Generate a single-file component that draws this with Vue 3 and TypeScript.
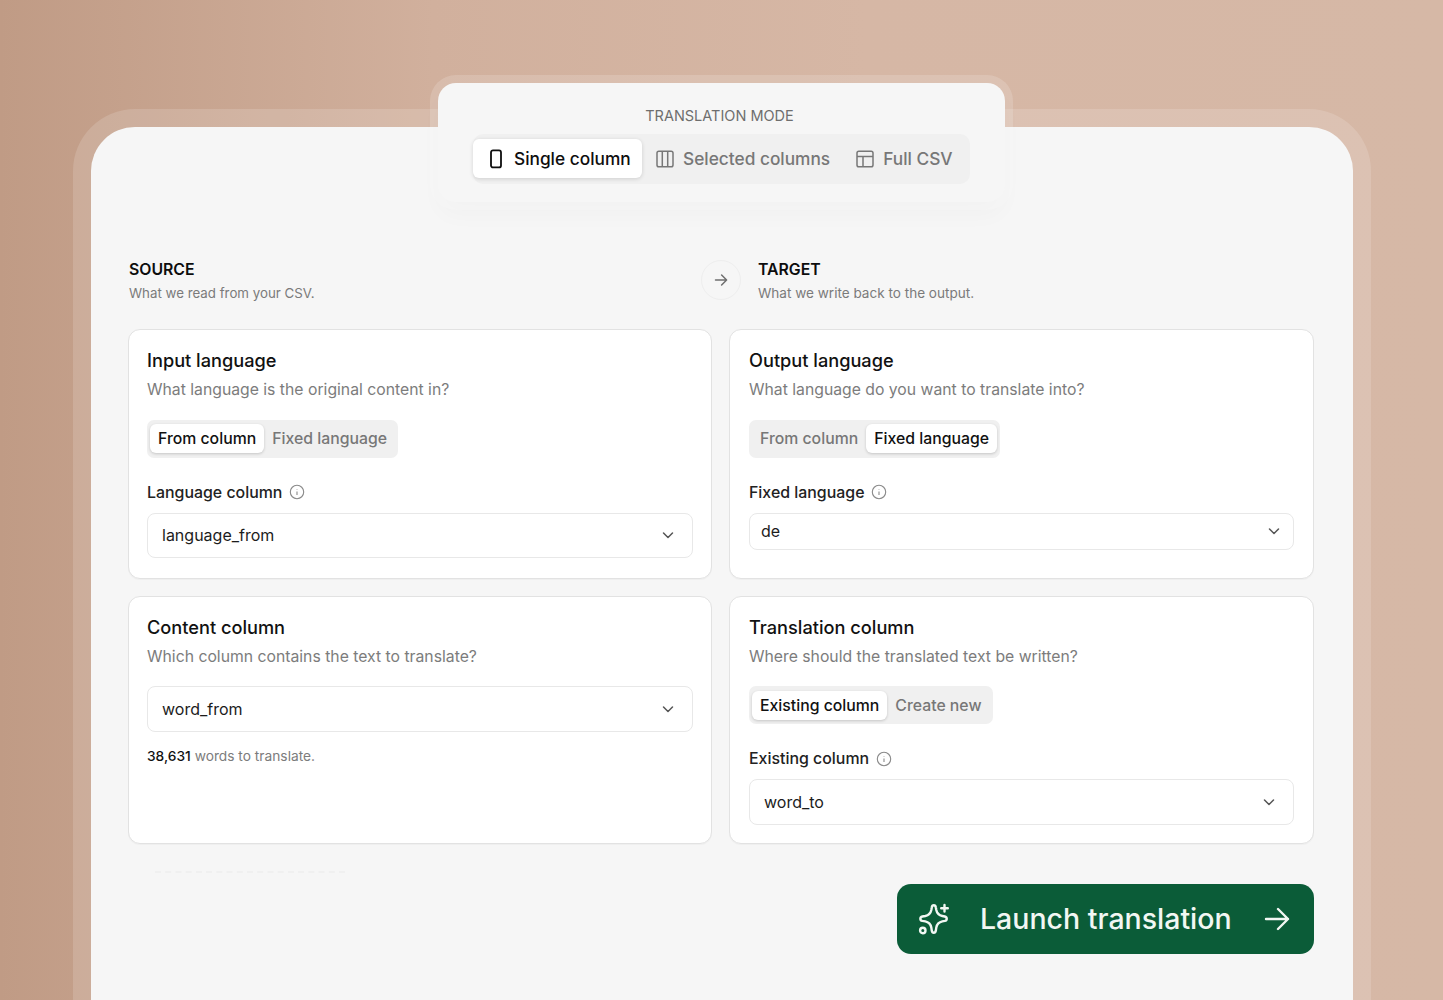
<script setup lang="ts">
const modes = [
  { label: 'Single column', icon: 'single', active: true },
  { label: 'Selected columns', icon: 'columns', active: false },
  { label: 'Full CSV', icon: 'table', active: false },
]
</script>

<template>
  <main class="page">
    <section class="shell">
      <div class="mode">
        <p class="mode-title">TRANSLATION MODE</p>
        <div class="mode-seg">
          <button v-for="m in modes" :key="m.label" class="mode-btn" :class="[{ on: m.active }, m.icon]">
            <svg v-if="m.icon === 'single'" width="18" height="20" viewBox="0 0 18 20" fill="none" stroke="currentColor" stroke-width="1.8">
              <rect x="4" y="1.400" width="10" height="17" rx="2" />
            </svg>
            <svg v-else-if="m.icon === 'columns'" width="18" height="18" viewBox="0 0 18 18" fill="none" stroke="currentColor" stroke-width="1.5">
              <rect x="1" y="1.200" width="16" height="15.600" rx="1.800" />
              <path d="M6.300 1.200v15.600M11.700 1.200v15.600" />
            </svg>
            <svg v-else width="18" height="18" viewBox="0 0 18 18" fill="none" stroke="currentColor" stroke-width="1.5">
              <rect x="1" y="1.200" width="16" height="15.600" rx="1.800" />
              <path d="M1 6.400h16M7 6.400v10.400" />
            </svg>
            <span>{{ m.label }}</span>
          </button>
        </div>
      </div>

      <div class="heads">
        <div class="head">
          <h2>SOURCE</h2>
          <p>What we read from your CSV.</p>
        </div>
        <div class="arrow-dot">
          <svg width="16" height="16" viewBox="0 0 16 16" fill="none" stroke="#6f6f6f" stroke-width="1.5" stroke-linecap="round" stroke-linejoin="round">
            <path d="M2.500 8h11M8.600 3l5 5-5 5" />
          </svg>
        </div>
        <div class="head target">
          <h2>TARGET</h2>
          <p>What we write back to the output.</p>
        </div>
      </div>

      <div class="grid">
        <article class="card">
          <h3>Input language</h3>
          <p class="sub">What language is the original content in?</p>
          <div class="seg">
            <span class="opt on">From column</span>
            <span class="opt">Fixed language</span>
          </div>
          <label class="lab">Language column
            <svg class="info" width="16" height="16" viewBox="0 0 16 16" fill="none" stroke="#8a8a8a" stroke-width="1.100"><circle cx="8" cy="8" r="6.700" /><path d="M8 7.400v3.600M8 5v.6" /></svg>
          </label>
          <div class="select">
            <span>language_from</span>
            <svg width="14" height="14" viewBox="0 0 14 14" fill="none" stroke="#555" stroke-width="1.500" stroke-linecap="round" stroke-linejoin="round"><path d="M2.500 5l4.500 4.500L11.500 5" /></svg>
          </div>
        </article>

        <article class="card right">
          <h3>Output language</h3>
          <p class="sub">What language do you want to translate into?</p>
          <div class="seg">
            <span class="opt">From column</span>
            <span class="opt on">Fixed language</span>
          </div>
          <label class="lab">Fixed language
            <svg class="info" width="16" height="16" viewBox="0 0 16 16" fill="none" stroke="#8a8a8a" stroke-width="1.100"><circle cx="8" cy="8" r="6.700" /><path d="M8 7.400v3.600M8 5v.6" /></svg>
          </label>
          <div class="select small">
            <span>de</span>
            <svg width="14" height="14" viewBox="0 0 14 14" fill="none" stroke="#555" stroke-width="1.500" stroke-linecap="round" stroke-linejoin="round"><path d="M2.500 5l4.500 4.500L11.500 5" /></svg>
          </div>
        </article>

        <article class="card">
          <h3>Content column</h3>
          <p class="sub">Which column contains the text to translate?</p>
          <div class="select spaced">
            <span>word_from</span>
            <svg width="14" height="14" viewBox="0 0 14 14" fill="none" stroke="#555" stroke-width="1.500" stroke-linecap="round" stroke-linejoin="round"><path d="M2.500 5l4.500 4.500L11.500 5" /></svg>
          </div>
          <p class="count"><b>38,631</b> words to translate.</p>
        </article>

        <article class="card right">
          <h3>Translation column</h3>
          <p class="sub">Where should the translated text be written?</p>
          <div class="seg">
            <span class="opt on">Existing column</span>
            <span class="opt">Create new</span>
          </div>
          <label class="lab">Existing column
            <svg class="info" width="16" height="16" viewBox="0 0 16 16" fill="none" stroke="#8a8a8a" stroke-width="1.100"><circle cx="8" cy="8" r="6.700" /><path d="M8 7.400v3.600M8 5v.6" /></svg>
          </label>
          <div class="select">
            <span>word_to</span>
            <svg width="14" height="14" viewBox="0 0 14 14" fill="none" stroke="#555" stroke-width="1.500" stroke-linecap="round" stroke-linejoin="round"><path d="M2.500 5l4.500 4.500L11.500 5" /></svg>
          </div>
        </article>
      </div>

      <div class="foot">
        <div class="faint"></div>
        <button class="launch">
          <svg class="spark" width="34" height="34" viewBox="0 0 34 34" fill="none" stroke="currentColor" stroke-width="2.400" stroke-linecap="round" stroke-linejoin="round">
            <path d="M14.800 5.200C15.200 2.600 18.400 2.600 18.800 5.200L19.300 8C20 11.300 22 13.300 25.300 14L27.800 14.500C30.400 15.100 30.400 18.300 27.800 18.900L25.300 19.400C22 20.100 20 22.100 19.300 25.400L18.800 28.800C18.300 31.400 15.300 31.400 14.800 28.800L14.300 25.400C13.600 22.100 11.600 20.100 8.300 19.400L5.300 18.900C2.700 18.300 2.700 15.100 5.300 14.500L8.300 14C11.600 13.300 13.600 11.300 14.300 8Z" />
            <path d="M27.500 3v6.500M24.200 6.200h6.600" />
            <circle cx="5.800" cy="28.500" r="2.700" />
          </svg>
          <span>Launch translation</span>
          <svg class="go" width="26" height="26" viewBox="0 0 26 26" fill="none" stroke="currentColor" stroke-width="2.400" stroke-linecap="round" stroke-linejoin="round">
            <path d="M2 13h22M14 3l10 10-10 10" />
          </svg>
        </button>
      </div>
    </section>
  </main>
</template>

<style>
html, body { margin: 0; background: #c9a893; }
</style>

<style scoped>
* { box-sizing: border-box; }
.page {
  height: 1000px;
  overflow: hidden;
  padding: 127px 90px 0 91px;
  font-family: Inter, "Liberation Sans", sans-serif;
  color: #111;
  background: linear-gradient(90deg, #c09b85 0%, #d1b09d 30%, #d6b7a5 60%, #d6b8a6 100%);
}
.shell {
  height: 900px;
  padding: 0 39px 0 37px;
  background: #f6f6f6;
  border-radius: 44px 44px 0 0;
  box-shadow: 0 0 0 18px rgba(255, 255, 255, 0.15);
}
.mode {
  width: 567px;
  height: 119px;
  margin: 0 auto;
  position: relative;
  top: -44px;
  left: 0.500px;
  padding: 24px 35px 0;
  background: #f6f6f6;
  border-radius: 18px;
  box-shadow: 0 0 0 8px rgba(255, 255, 255, 0.16), 0 14px 22px rgba(0, 0, 0, 0.025);
  text-align: center;
}
.mode-title {
  margin: 0 0 9px;
  font-size: 14.500px;
  line-height: 18px;
  color: #6e6e6e;
  transform: translateX(-2px);
}
.mode-seg {
  display: flex;
  width: 497px;
  height: 50px;
  padding: 5px 0 6px;
  background: #f0f0f0;
  border-radius: 10px;
}
.mode-btn {
  display: flex;
  align-items: center;
  gap: 9px;
  padding: 0;
  border: 0;
  background: none;
  font: 500 17.300px/1 Inter, "Liberation Sans", sans-serif;
  color: #777;
  white-space: nowrap;
}
.mode-btn.on {
  width: 169px;
  padding-left: 14px;
  background: #fff;
  color: #0e0e0e;
  border-radius: 6px;
  box-shadow: 0 1px 4px rgba(0, 0, 0, 0.14);
}
.mode-btn.columns { margin-left: 14px; }
.mode-btn.table { margin-left: 26px; }
.heads {
  display: flex;
  height: 69px;
  margin-top: 14px;
  padding-left: 1px;
}
.head h2 {
  margin: 0;
  font-size: 15.800px;
  line-height: 20px;
  font-weight: 600;
  color: #0d0d0d;
}
.head p {
  margin: 4px 0 0;
  font-size: 13.300px;
  line-height: 18px;
  color: #7b7b7b;
}
.head.target p { font-size: 13.550px; }
.arrow-dot {
  width: 40px;
  height: 40px;
  margin: 0 17px 0 auto;
  display: flex;
  align-items: center;
  justify-content: center;
  border-radius: 50%;
  border: 1.500px solid #eeeeee;
}
.head.target { width: 556px; }
.grid {
  display: grid;
  grid-template-columns: 584px 585px;
  grid-template-rows: 249.500px 248.500px;
  column-gap: 17px;
  row-gap: 17px;
}
.card {
  padding: 19px 18px 0;
  background: #fff;
  border: 1.500px solid #e2e2e2;
  border-radius: 12px;
  box-shadow: 0 1px 1px rgba(0, 0, 0, 0.03);
}
.card.right { padding: 19px 19px 0; }
.card h3 {
  margin: 0;
  font-size: 18.200px;
  line-height: 22px;
  font-weight: 500;
  color: #111;
}
.sub {
  margin: 8px 0 0;
  font-size: 15.750px;
  line-height: 22px;
  color: #7c7c7c;
}
.seg {
  display: inline-flex;
  align-items: center;
  height: 38px;
  margin-top: 18.500px;
  padding: 0 3px;
  background: #f0f0f0;
  border-radius: 7px;
  font-size: 15.800px;
  font-weight: 500;
  color: #777;
}
.opt {
  height: 29px;
  display: flex;
  align-items: center;
  padding: 0 8px;
  white-space: nowrap;
}
.opt.on {
  background: #fff;
  color: #111;
  border-radius: 6px;
  box-shadow: 0 1px 3px rgba(0, 0, 0, 0.18);
}
.lab {
  display: flex;
  align-items: center;
  height: 22px;
  margin-top: 23.500px;
  font-size: 15.900px;
  font-weight: 500;
  color: #222;
}
.info { margin-left: 7px; }
.select {
  display: flex;
  align-items: center;
  justify-content: space-between;
  height: 45.500px;
  margin-top: 9.500px;
  padding: 0 17px 0 14px;
  border: 1.500px solid #e8e8e8;
  border-radius: 8px;
  font-size: 16px;
  color: #1c1c1c;
}
.select.small {
  height: 37px;
  padding: 0 12px 0 11px;
}
.select.spaced { margin-top: 18.500px; }
.count {
  margin: 14.500px 0 0;
  font-size: 13.750px;
  line-height: 20px;
  color: #7c7c7c;
}
.count b { font-weight: 500; color: #111; }
.foot {
  display: flex;
  align-items: flex-start;
  justify-content: space-between;
  margin-top: 40px;
}
.faint {
  width: 190px;
  margin: -13px 0 0 27px;
  border-top: 2px dashed #f0f0f0;
}
.launch {
  display: flex;
  align-items: center;
  width: 417px;
  height: 70px;
  padding: 0;
  border: 0;
  border-radius: 14px;
  background: #0b5c38;
  color: #f2f7f3;
  font: 500 28.500px/1 Inter, "Liberation Sans", sans-serif;
}
.spark { margin-left: 20px; }
.launch span { margin-left: 29px; white-space: nowrap; }
.go { margin-left: auto; margin-right: 24px; }
</style>
